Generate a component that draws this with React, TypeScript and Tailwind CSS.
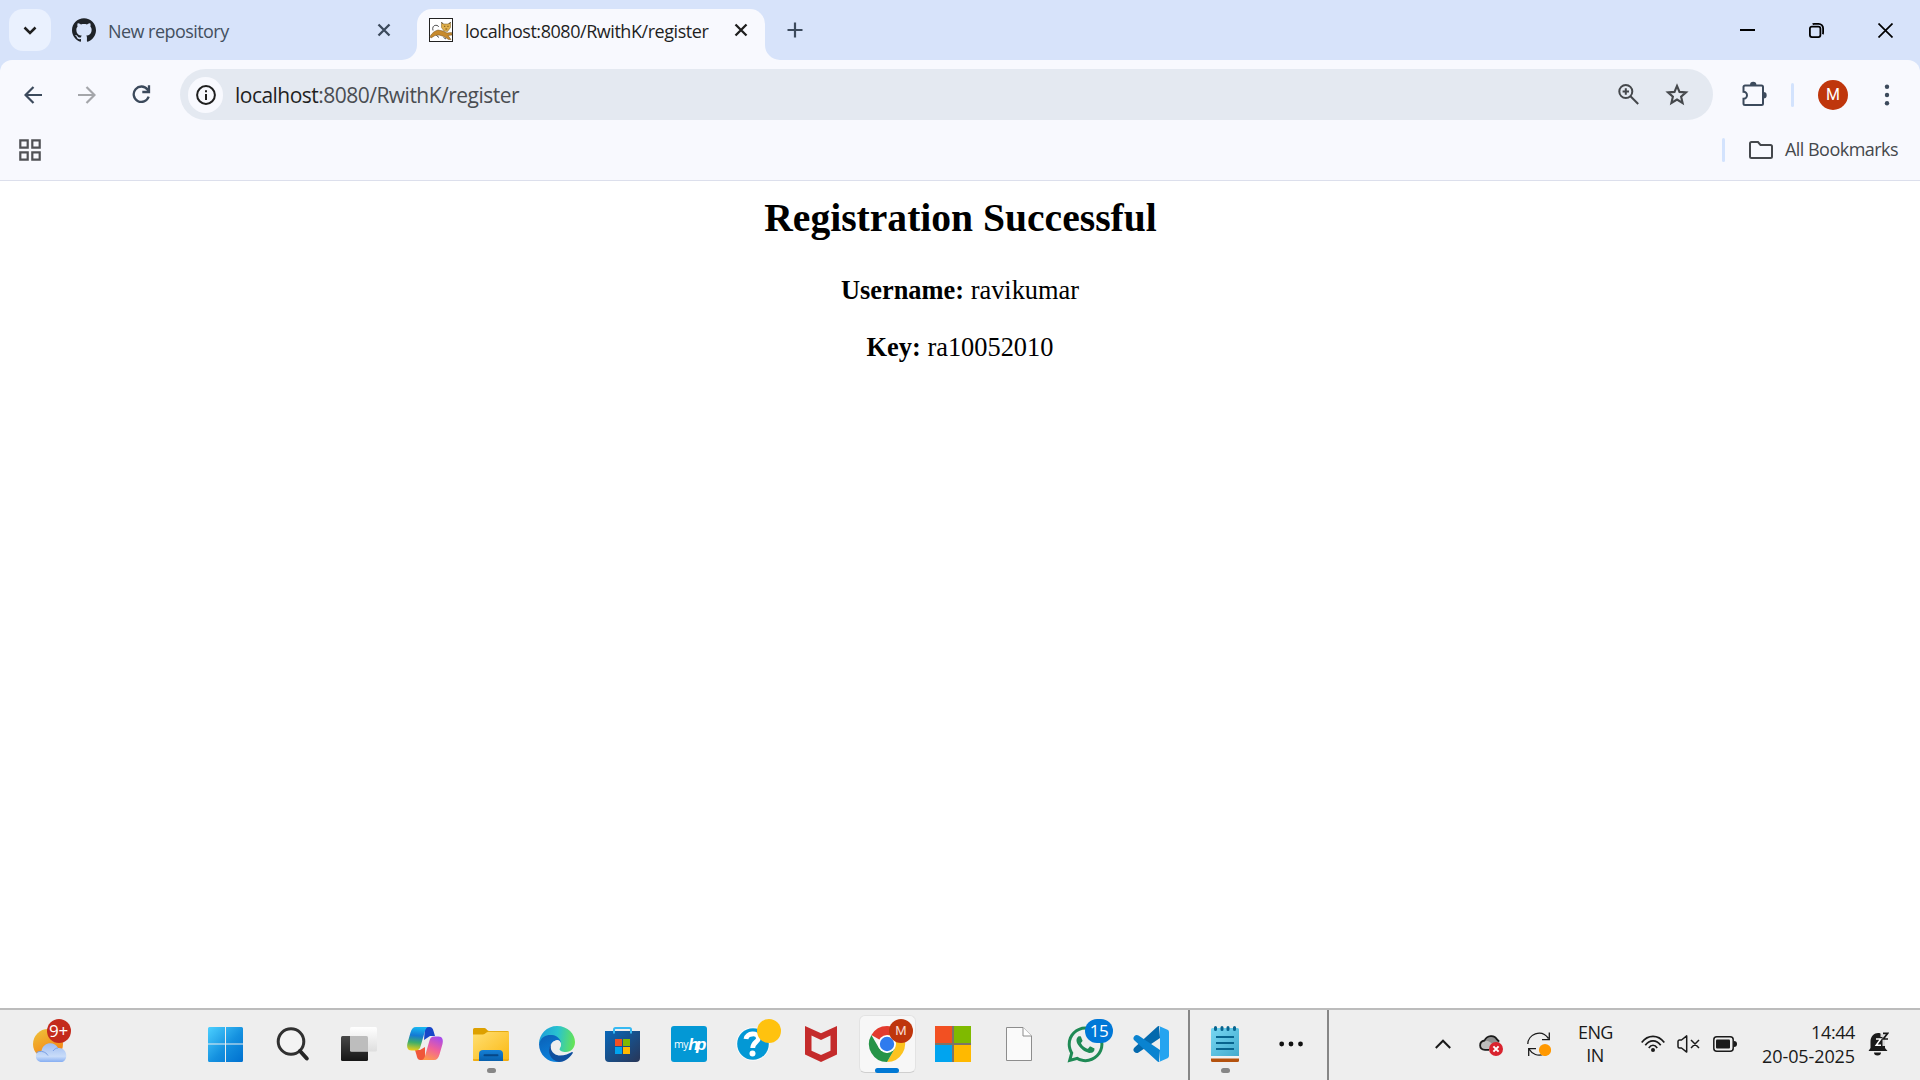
import type { ReactNode } from "react";
import { SiGithub } from "react-icons/si";
import { FaWhatsapp } from "react-icons/fa";

const sans = "font-['Open_Sans',sans-serif]";

function TomcatIcon() {
  return (
    <svg width="24" height="24" viewBox="0 0 24 24" className="shrink-0">
      <rect x=".5" y=".5" width="23" height="23" fill="#fff" stroke="#222" />
      <path d="M1 18.500C3 15 5.500 13 9 12L14 13L18 15L22.500 14.500L23 17L19 17.500L22 21.500L19.500 21.500L15 18.500L10 17L6 17.500L2 20Z" fill="#c78a2c" stroke="#6b4a1c" strokeWidth=".5" />
      <path d="M12.5 4.500L14.500 6H19L21.500 4.500V9.500L18.500 13.500L15 13L12.500 9.500Z" fill="#e0b04c" stroke="#7a5a22" strokeWidth=".5" />
      <path d="M15 8.300h1.300M18.300 8.300h1.300M16.400 11h1.800" stroke="#6e4a10" strokeWidth=".9" />
      <path d="M12.500 4.200l1.600 1.600M21.600 4.200l-1.600 1.600M4 12.500c-1-3 .5-5.300 2.800-5.200s2.500.7 2.700 1.700M7.500 17.500l2.500 2M14.500 19.500l2.500 1.500" stroke="#222" strokeWidth=".8" fill="none" />
    </svg>
  );
}

function Cross({ color }: { color: string }) {
  return (
    <svg width="14" height="14" viewBox="0 0 14 14" fill="none" stroke={color} strokeWidth="2.3">
      <path d="M1.5 1.5l11 11M12.500 1.500l-11 11" />
    </svg>
  );
}

function TabStrip() {
  return (
    <header className="flex h-[60px] items-center bg-[#d7e3fa]">
      <button className="ml-[9px] flex h-[42px] w-[42px] items-center justify-center rounded-[14px] bg-[#eaf1fe]">
        <svg width="14" height="9" viewBox="0 0 14 9" fill="none" stroke="#1f1f1f" strokeWidth="2.5"><path d="M1.500 1.500L7 7l5.500-5.500" /></svg>
      </button>
      <div className="ml-[21px] flex h-[42px] w-[345px] items-center text-[#44505f]">
        <SiGithub size={24} color="#1f2328" />
        <span className="ml-3 h-6 flex-1 pt-px text-[18px] leading-6 tracking-[-0.55px]">New repository</span>
        <span className="mr-[26px]"><Cross color="#3c4a5c" /></span>
      </div>
      <div className="relative h-[51px] w-[348px] self-end rounded-t-[15px] bg-[#f8f9fe] text-[#1f1f1f]">
        <svg className="absolute -left-[15px] bottom-0" width="15" height="15"><path d="M15 0A15 15 0 0 1 0 15H15Z" fill="#f8f9fe" /></svg>
        <svg className="absolute -right-[15px] bottom-0" width="15" height="15"><path d="M0 0A15 15 0 0 0 15 15H0Z" fill="#f8f9fe" /></svg>
        <div className="flex h-[42px] items-center pl-3">
          <TomcatIcon />
          <span className="ml-3 h-6 flex-1 whitespace-nowrap pt-px text-[18px] leading-6 tracking-[-0.45px]">localhost:8080/RwithK/register</span>
          <span className="mr-[17px]"><Cross color="#1f1f1f" /></span>
        </div>
      </div>
      <svg className="ml-[22px]" width="16" height="16" viewBox="0 0 16 16" stroke="#3c4a5c" strokeWidth="2.200"><path d="M8 .5v15M.5 8h15" /></svg>
      <div className="ml-auto mr-[27px] flex items-center gap-[54px]">
        <svg width="15" height="15" stroke="#000" strokeWidth="2"><path d="M0 7h15" /></svg>
        <svg width="15" height="15" viewBox="0 0 15 15" fill="none" stroke="#000" strokeWidth="1.800">
          <rect x=".9" y="3.600" width="10.500" height="10.500" rx="2" />
          <path d="M3.600 1.200C4.300.9 4.800.9 5.500.9h4.200a4.400 4.400 0 0 1 4.400 4.400v3.900c0 .9 0 1.400-.4 2" />
        </svg>
        <svg width="15" height="15" viewBox="0 0 15 15" fill="none" stroke="#000" strokeWidth="1.700"><path d="M.5.5l14 14M14.500.5l-14 14" /></svg>
      </div>
    </header>
  );
}

function Toolbar() {
  return (
    <div className="bg-[#d7e3fa]">
      <div className="flex h-[69px] items-center rounded-t-[12px] bg-[#f8f9fe]">
        <svg className="ml-6" width="18" height="18" viewBox="0 0 18 18" fill="none" stroke="#3c4a5c" strokeWidth="2.200"><path d="M18 9H1.700M9.500 1L1.500 9l8 8" /></svg>
        <svg className="ml-9" width="18" height="18" viewBox="0 0 18 18" fill="none" stroke="#a4a6aa" strokeWidth="2.200"><path d="M0 9h16.300M8.500 1l8 8-8 8" /></svg>
        <svg className="ml-9" width="19" height="19" viewBox="0 0 19 19" fill="none" stroke="#3c4a5c" strokeWidth="2.300">
          <path d="M16.700 11.700A7.700 7.700 0 1 1 15.500 4.500L17 6.500M17 .3v6.700h-6.700" />
        </svg>
        <div className="ml-[29px] flex h-[51px] w-[1533px] items-center rounded-full bg-[#e4e9f1] pl-2">
          <span className="flex h-[36px] w-[35px] items-center justify-center rounded-full bg-[#f8f9fe]">
            <svg width="20" height="20" viewBox="0 0 20 20" fill="none" stroke="#1f1f1f">
              <circle cx="10" cy="10" r="8.900" strokeWidth="2" /><path d="M10 9v6M10 5.300v2" strokeWidth="2" />
            </svg>
          </span>
          <span className="ml-3 h-7 flex-1 text-[21px] leading-7 tracking-[-0.52px] text-[#4a4d52]"><span className="text-[#1f1f1f]">localhost</span>:8080/RwithK/register</span>
          <svg className="mr-[26px]" width="21" height="21" viewBox="0 0 21 21" fill="none" stroke="#45484c" strokeWidth="2">
            <circle cx="7.800" cy="7.500" r="6.500" /><path d="M12.500 12.200l7.700 7.800M7.800 4.300v6.400M4.600 7.500H11" />
          </svg>
          <svg className="mr-[24px]" width="24" height="24" viewBox="0 0 24 24" fill="none" stroke="#45484c" strokeWidth="2.100">
            <path d="M12 2.900l2.500 6 6.500.5-4.900 4.200 1.500 6.400L12 16.600 6.400 20l1.500-6.400L3 9.400l6.500-.5z" />
          </svg>
        </div>
        <svg className="-mt-[2px] ml-[29px]" width="25" height="25" viewBox="0 0 25 25" fill="none" stroke="#3c4a5c" strokeWidth="2">
          <path d="M3 4.500H19.500a1.500 1.500 0 0 1 1.500 1.500V22.500a1.500 1.500 0 0 1-1.500 1.500H3a1.500 1.500 0 0 1-1.500-1.500V17.700a3.500 3.500 0 0 0 0-7V6A1.500 1.500 0 0 1 3 4.500Z" />
          <path d="M8 4a3.200 3.200 0 0 1 6.400 0zM21.500 11a3.200 3.200 0 0 1 0 6.400z" fill="#3c4a5c" stroke="none" />
        </svg>
        <span className="ml-[24px] h-6 w-[3px] rounded-full bg-[#d3e3fd]" />
        <span className="ml-6 flex h-[30px] w-[30px] items-center justify-center rounded-full bg-[#bf360c] text-[16px] text-white font-['Roboto',sans-serif]">M</span>
        <svg className="ml-9" width="6" height="22" viewBox="0 0 6 22" fill="#3c4a5c"><circle cx="3" cy="2.800" r="2.200" /><circle cx="3" cy="11" r="2.200" /><circle cx="3" cy="19.200" r="2.200" /></svg>
      </div>
    </div>
  );
}

function BookmarksBar() {
  return (
    <div className="flex h-[52px] items-center border-b border-[#dcdfec] bg-[#f8f9fe] pb-[9px]">
      <svg className="ml-[19px]" width="22" height="22" viewBox="0 0 22 22" fill="none" stroke="#505256" strokeWidth="2.200">
        <path d="M1.300 1.300H8.700V8.700H1.300ZM13.300 1.300H20.700V8.700H13.300ZM1.300 13.300H8.700V20.700H1.300ZM13.300 13.300H20.700V20.700H13.300Z" />
      </svg>
      <span className="ml-auto h-6 w-[3px] rounded-full bg-[#d3e3fd]" />
      <svg className="ml-6" width="24" height="18" viewBox="0 0 24 18" fill="none" stroke="#45484c" strokeWidth="2"><path d="M2.500 1H9l2.500 3H21.500A1.500 1.500 0 0 1 23 5.500V15.500A1.500 1.500 0 0 1 21.500 17H2.500A1.500 1.500 0 0 1 1 15.500V2.500A1.500 1.500 0 0 1 2.500 1Z" /></svg>
      <span className="mb-[2px] ml-3 mr-[21px] h-6 w-[114px] whitespace-nowrap text-[18px] leading-6 tracking-[-0.53px] text-[#45484c]">All Bookmarks</span>
    </div>
  );
}

function App36({ children }: { children: ReactNode }) {
  return <svg width="36" height="36" viewBox="0 0 36 36" className="overflow-visible">{children}</svg>;
}

function Slot({ children, running, active }: { children: ReactNode; running?: boolean; active?: boolean }) {
  return (
    <div className="relative flex h-[70px] w-[66px] shrink-0 items-center justify-center">
      {active && <span className="absolute left-[5px] top-[5px] h-[58px] w-[57px] rounded-[6px] border border-[#e3e3e3] border-b-[#cfcfcf] bg-[#f7f7f7]" />}
      <span className="relative -mt-[2px]">{children}</span>
      {running && <span className="absolute left-[29px] top-[58px] h-[5px] w-[9px] rounded-full bg-[#868686]" />}
      {active && <span className="absolute left-[21px] top-[58px] h-[5px] w-6 rounded-full bg-[#0078d4]" />}
    </div>
  );
}

function Pinned() {
  return (
    <>
      <Slot><App36>
        <defs><linearGradient id="win" x1="0" y1="0" x2="1" y2="1"><stop offset="0" stopColor="#4cd0ff" /><stop offset=".55" stopColor="#1490df" /><stop offset="1" stopColor="#0070cf" /></linearGradient></defs>
        <path d="M-1 2.500A1.500 1.500 0 0 1 .5 1H16V17.500H-1ZM17 1H32.500A1.500 1.500 0 0 1 34 2.500V17.500H17ZM-1 18.500H16V36H.5A1.500 1.500 0 0 1-1 34.500ZM17 18.500H34V34.500A1.500 1.500 0 0 1 32.500 36H17Z" fill="url(#win)" />
      </App36></Slot>
      <Slot><App36>
        <circle cx="16" cy="15.500" r="12.800" fill="#f3f3f3" stroke="#303030" strokeWidth="3" /><path d="M25 25l6.800 7.500" stroke="#252525" strokeWidth="4" strokeLinecap="round" />
      </App36></Slot>
      <Slot><App36>
        <defs>
          <linearGradient id="tv1" x1="0" y1="0" x2="0" y2="1"><stop stopColor="#484848" /><stop offset="1" stopColor="#161616" /></linearGradient>
          <linearGradient id="tv2" x1="0" y1="0" x2="0" y2="1"><stop stopColor="#fff" /><stop offset="1" stopColor="#dedede" /></linearGradient>
        </defs>
        <rect x="0" y="10" width="27" height="25" rx="1.500" fill="url(#tv1)" />
        <rect x="9" y="1" width="27" height="24.500" rx="1.500" fill="url(#tv2)" />
        <path d="M9 10H25.500A1.500 1.500 0 0 1 27 11.500V25.500H10.500A1.500 1.500 0 0 1 9 24Z" fill="#bdbdbd" />
      </App36></Slot>
      <Slot><App36>
        <defs>
          <linearGradient id="cp1" x1="0.300" y1="0" x2="0.200" y2="1"><stop stopColor="#18b5f0" /><stop offset=".35" stopColor="#1479d4" /><stop offset=".65" stopColor="#3fae6a" /><stop offset="1" stopColor="#f2cf15" /></linearGradient>
          <linearGradient id="cp2" x1=".7" y1="0" x2=".3" y2="1"><stop stopColor="#a94bea" /><stop offset=".5" stopColor="#f0609a" /><stop offset="1" stopColor="#ff9a4c" /></linearGradient>
        </defs>
        <path d="M18 1H22.500C25 1 26 3 26.500 5L28 10H23L17 14Z" fill="#1746c8" />
        <path d="M18 34H13.500C11 34 10 32 9.500 29L8 24H13L18 21Z" fill="#f0573a" />
        <path d="M9 1H22C19.500 1 18.700 3 18 5L13.500 20.500C12.700 23 11.500 24.500 8.500 24.500H4.500C.5 24.500-.5 21 .5 17L3.500 6.500C4.500 3 6 1 9 1Z" fill="url(#cp1)" />
        <path d="M27 34H14C16.500 34 17.300 32 18 30L22.500 14.500C23.300 12 24.500 10.500 27.500 10.500H31.500C35.500 10.500 36.500 14 35.500 18L32.500 28.500C31.500 32 30 34 27 34Z" fill="url(#cp2)" />
      </App36></Slot>
      <Slot running><App36>
        <defs>
          <linearGradient id="fe1" x1="0" y1="0" x2="1" y2="1"><stop stopColor="#ffdf72" /><stop offset="1" stopColor="#fbb812" /></linearGradient>
          <linearGradient id="fe2" x1="0" y1="0" x2="0" y2="1"><stop stopColor="#1580d6" /><stop offset="1" stopColor="#0860ad" /></linearGradient>
        </defs>
        <path d="M0 3.500A1.500 1.500 0 0 1 1.500 2H11.500C13.500 2 14 5 16 5H34.500A1.500 1.500 0 0 1 36 6.500V12H0Z" fill="#dda000" />
        <path d="M0 8.500H10C12.500 8.500 13 5.800 16 5.800H36V34H35L1 35A1 1 0 0 1 0 34Z" fill="url(#fe1)" />
        <path d="M0 33H36V33.500A1.500 1.500 0 0 1 34.500 35H1.500A1.500 1.500 0 0 1 0 33.500Z" fill="#f0ad15" />
        <path d="M6 35V28A4 4 0 0 1 10 24H26A4 4 0 0 1 30 28V35Z" fill="url(#fe2)" />
        <path d="M11.500 29.200H24.500" stroke="#064787" strokeWidth="2" strokeLinecap="round" />
      </App36></Slot>
      <Slot><App36>
        <defs>
          <linearGradient id="ed1" x1="0" y1=".4" x2="1" y2=".5"><stop stopColor="#1c9ed9" /><stop offset=".5" stopColor="#29c3cf" /><stop offset="1" stopColor="#66e454" /></linearGradient>
          <linearGradient id="ed2" x1="0" y1="0" x2=".4" y2="1"><stop stopColor="#0b5fb5" /><stop offset="1" stopColor="#0c82dc" /></linearGradient>
        </defs>
        <path d="M0 18C0 8 8 0 18 0C29 0 36 8 36 16C36 22 32 26 27 26C23 26 20 24.500 20.500 23C21.500 21 22.500 19.500 21.500 17C20 12 8 8 0 18Z" fill="url(#ed1)" />
        <path d="M0 18C2 10 8 8.500 13 9C18.500 9.500 22.500 14 22 18C21 13.500 15 13 12 18C8 26 15 36 24 35C14 39 0 32 0 18Z" fill="url(#ed2)" />
        <path d="M14 15C9 21 13 29.500 21 29.500C26 29.500 30 27.500 32.500 26.200C33.300 25.800 34.200 26.500 33.700 27.300C30 33 25 36 20 36C11 34.500 7.500 25 12 18Z" fill="#104f9f" />
        <path d="M14 17.500C15.500 13 21.500 12.500 22 18C22.200 20.500 19.500 21.500 20.500 23.500C18 24 13.500 22 14 17.500Z" fill="#eeeeee" />
      </App36></Slot>
      <Slot><App36>
        <defs><linearGradient id="st" x1="0" y1="0" x2="1" y2="1"><stop stopColor="#0867b9" /><stop offset="1" stopColor="#293657" /></linearGradient></defs>
        <path d="M0 5H35V32A4 4 0 0 1 31 36H4A4 4 0 0 1 0 32Z" fill="url(#st)" />
        <path d="M9 7.500V3.500A1.500 1.500 0 0 1 10.500 2H24.500A1.500 1.500 0 0 1 26 3.500V7.500" fill="none" stroke="#36b9f2" strokeWidth="2" />
        <path d="M10 13H17V20H10Z" fill="#f25022" /><path d="M18 13H25V20H18Z" fill="#7fba00" /><path d="M10 21H17V28H10Z" fill="#00a4ef" /><path d="M18 21H25V28H18Z" fill="#ffb900" />
      </App36></Slot>
      <Slot>
        <span className="flex h-9 w-9 items-center justify-center rounded-[3px] bg-[#0398d5] text-white">
          <span className="pt-px text-[10.500px] leading-none tracking-[-0.4px]">my</span><span className="text-[17px] font-bold italic leading-none tracking-[-2.500px] font-['Liberation_Sans',sans-serif]">hp</span>
        </span>
      </Slot>
      <Slot><App36>
        <circle cx="16" cy="18" r="16.800" fill="#fafafa" /><circle cx="16" cy="18" r="15.800" fill="#0398d5" />
        <path d="M9 13C9.500 7 21 6 21.500 12C21.500 16 16 16 15.700 22" fill="none" stroke="#fff" strokeWidth="4.800" /><circle cx="15.500" cy="27.500" r="3" fill="#fff" />
        <circle cx="32" cy="5" r="12" fill="#ffc20e" />
      </App36></Slot>
      <Slot><App36>
        <path d="M2 0L18 7.200L34 0V28.500L18 36L2 28.500ZM8.500 9.500V24.700L18 29L27.500 24.700V9.500L18 14Z" fill="#c42b2b" fillRule="evenodd" />
      </App36></Slot>
      <Slot active>
        <App36>
          <path d="M18 18L2.400 9A18 18 0 0 1 33.600 9H18Z" fill="#e33b2e" />
          <path d="M33.600 9A18 18 0 0 1 18 36L25.800 22.500L18 9Z" fill="#fcc31e" />
          <path d="M18 36A18 18 0 0 1 2.400 9L10.200 22.500L18 27L25.800 22.500Z" fill="#259447" />
          <circle cx="18" cy="18" r="9" fill="#fff" /><circle cx="18" cy="18" r="7.200" fill="#2f7bee" />
        </App36>
        <span className="absolute -top-[7px] left-5 flex h-6 w-6 items-center justify-center rounded-full bg-[#bf360c] text-[13px] text-[#f9d9cf] font-['Roboto',sans-serif]">M</span>
      </Slot>
      <Slot><App36>
        <path d="M0 0H36V36H0Z" fill="#7d7467" /><path d="M0 0H17V17H0Z" fill="#f25022" /><path d="M19 0H36V17H19Z" fill="#7fba00" /><path d="M0 19H17V36H0Z" fill="#00a4ef" /><path d="M19 19H36V36H19Z" fill="#ffb900" />
      </App36></Slot>
      <Slot><App36>
        <path d="M5.500 1.500H22L30.500 10V34.500H5.500Z" fill="#fafafa" stroke="#8d8d8d" strokeWidth="1" /><path d="M22 1.500V10H30.500" fill="#fff" stroke="#8d8d8d" />
      </App36></Slot>
      <Slot>
        <FaWhatsapp size={41} color="#1f8a55" className="-m-[2.500px]" />
        <span className="absolute -top-[7px] left-[18px] flex h-6 w-7 items-center justify-center rounded-full bg-[#0078d7] text-[17px] tracking-[-0.5px] text-white">15</span>
      </Slot>
      <Slot><App36>
        <path d="M26 0L27 12L5.500 26.500C4 27.500 2.500 27 1.500 26C0 24.500 0 23 1.500 21.500L24 1C24.500.4 25.200 0 26 0Z" fill="#0469ad" />
        <path d="M26 36L27 24L5.500 9.500C4 8.500 2.500 9 1.500 10C0 11.500 0 13 1.500 14.500L24 35C24.500 35.600 25.200 36 26 36Z" fill="#0a83d0" />
        <path d="M26 0L34.500 3.800A2.500 2.500 0 0 1 36 6V30A2.500 2.500 0 0 1 34.500 32.200L26 36C26.500 35.500 27 35 27 34V2C27 1 26.500.5 26 0Z" fill="#25a4f0" />
      </App36></Slot>
    </>
  );
}

function Taskbar() {
  return (
    <footer className="flex h-[72px] border-t-2 border-[#bcbcbc] bg-[#eeeeee]">
      <div className="w-[194px] pl-[33px] pt-[8px]">
        <div className="relative">
          <svg width="36" height="44" viewBox="0 0 36 44">
            <defs>
              <linearGradient id="sun" x1=".1" y1="0" x2=".6" y2="1"><stop stopColor="#eec23a" /><stop offset="1" stopColor="#f57f12" /></linearGradient>
              <linearGradient id="cloud" x1="0" y1="0" x2="0" y2="1"><stop stopColor="#9dbcf0" /><stop offset=".7" stopColor="#c9dcf9" /><stop offset="1" stopColor="#86aef2" /></linearGradient>
            </defs>
            <circle cx="15" cy="26" r="15" fill="url(#sun)" />
            <path d="M9 44C1 44 1 33 8.500 33C10 23.500 22 23 25 30C35 29 36 44 28 44Z" fill="url(#cloud)" />
            <path d="M3.500 34.500C8 32 13 34 15 37.500M20 33C21.500 31 23 30 25 30" fill="none" stroke="#7a9fe2" strokeWidth="1" />
          </svg>
          <span className="absolute left-[13.500px] top-[0.500px] flex h-6 w-6 items-center justify-center rounded-full bg-[#c42b1c] text-[17px] font-medium leading-none tracking-[-0.3px] text-white">9+</span>
        </div>
      </div>
      <Pinned />
      <div className="ml-[4px] flex w-[141px] border-x-2 border-[#868686]">
        <div className="ml-[2px] flex">
          <Slot running><App36>
            <defs><linearGradient id="np" x1="0" y1="0" x2="1" y2="1"><stop stopColor="#77d7f2" /><stop offset="1" stopColor="#43abce" /></linearGradient></defs>
            <path d="M4 30H32V34.500A1.500 1.500 0 0 1 30.500 36H5.500A1.500 1.500 0 0 1 4 34.500Z" fill="#b4520e" /><path d="M4 29H32V32.500H4Z" fill="#f2f2f2" />
            <path d="M4 3.500A1.500 1.500 0 0 1 5.500 2H30.500A1.500 1.500 0 0 1 32 3.500V30H4Z" fill="url(#np)" />
            <path d="M9 11H27M9 17H27M9 23H27" stroke="#08648e" strokeWidth="2" />
            <path d="M8.500 1.500V3.500M15 1.500V3.500M21 1.500V3.500M27.500 1.500V3.500" stroke="#08648e" strokeWidth="3" strokeLinecap="round" />
          </App36></Slot>
          <Slot><App36><circle cx="8.700" cy="18" r="2.400" fill="#111" /><circle cx="18" cy="18" r="2.400" fill="#111" /><circle cx="27.500" cy="18" r="2.400" fill="#111" /></App36></Slot>
        </div>
      </div>
      <div className="flex flex-1 items-center pb-[2px] text-[#1a1a1a]">
        <svg className="ml-[106px]" width="16" height="10" viewBox="0 0 16 10" fill="none" stroke="#1a1a1a" strokeWidth="2"><path d="M.8 9L8 1.700 15.200 9" /></svg>
        <svg className="ml-[28px]" width="24" height="24" viewBox="0 0 24 24">
          <path d="M5.500 9C7.500 3 15 2 18 7L21 10L14 14Z" fill="#8e8e8e" />
          <path d="M5 9C9 8 11 10 15 13L12 17.500H6C0 17.500 0 10 5 9Z" fill="#bdbdbd" />
          <path d="M10 17.800H6C-.5 17.500-.3 9.500 5.500 8.500C8 3 15.500 2.500 18 7.500L20 9.500" fill="none" stroke="#1a1a1a" strokeWidth="1.800" />
          <circle cx="17" cy="17" r="7" fill="#d9232e" /><path d="M14.400 14.400l5.200 5.200M19.600 14.400l-5.200 5.200" stroke="#fff" strokeWidth="2" />
        </svg>
        <svg className="ml-6" width="24" height="24" viewBox="0 0 24 24" fill="none" stroke="#1a1a1a" strokeWidth="1.300">
          <path d="M.8 12C.8 3 14-4 21.500 6.500M22.300.5V7.700H15M17 22C11 25 5 22 2 17M1.700 24V16.700H9" /><circle cx="18" cy="18" r="6.100" fill="#ff9800" stroke="none" />
        </svg>
        <div className="mr-px ml-[27px] w-[34px] text-center text-[18px] leading-[23px] tracking-[-0.6px]">ENG<br />IN</div>
        <svg className="ml-[28px]" width="24" height="20" viewBox="0 0 24 20" fill="none" stroke="#1a1a1a" strokeWidth="1.700">
          <path d="M.7 8.500C7 .3 17 .3 23.300 8.500M4.300 11.300C8.500 5.500 15.500 5.500 19.700 11.300M7.800 14C10.200 10.300 13.800 10.300 16.200 14" /><circle cx="12" cy="16" r="2" fill="#1a1a1a" stroke="none" />
        </svg>
        <svg className="ml-3" width="23" height="18" viewBox="0 0 23 18" fill="none" stroke="#1a1a1a" strokeWidth="1.500">
          <path d="M1 6.500A1.500 1.500 0 0 1 2.500 5H4.500L9.700.9V17.100L4.500 13H2.500A1.500 1.500 0 0 1 1 11.500ZM14 5l8 8M22 5l-8 8" strokeLinejoin="round" />
        </svg>
        <svg className="ml-[13px]" width="24" height="16" viewBox="0 0 24 16">
          <rect x=".8" y=".8" width="19.400" height="14.400" rx="3" fill="none" stroke="#1a1a1a" strokeWidth="1.500" /><rect x="3" y="3.500" width="14" height="9" rx="1" fill="#1a1a1a" /><path d="M21 5C23 5 24 6 24 8S23 11 21 11Z" fill="#1a1a1a" />
        </svg>
        <div className="mb-px ml-auto whitespace-nowrap text-right text-[18px] leading-6"><div className="tracking-[-0.4px]">14:44</div><div className="tracking-[-0.1px]">20-05-2025</div></div>
        <svg className="ml-[13px] mr-[31px]" width="21" height="24" viewBox="0 0 21 24">
          <path d="M2.500 10C2.500-1.500 16.500-1.500 17 8V16L19.500 19H.5L2.500 16ZM6 20.500H13A3.500 3 0 0 1 6 20.500Z" fill="#1a1a1a" />
          <path d="M12.500 0H21V9H17V14H7V5H12.500Z" fill="#eeeeee" opacity=".9" />
          <path d="M15 1.300H19.700L15.300 7H20" fill="none" stroke="#1a1a1a" strokeWidth="1.700" />
          <path d="M6 5H14.500V15H6Z" fill="#1a1a1a" /><path d="M8 7H12.700L8.200 13.200H13" fill="none" stroke="#fff" strokeWidth="1.500" />
        </svg>
      </div>
    </footer>
  );
}

export default function App() {
  return (
    <div className={`flex h-[1080px] w-[1920px] flex-col overflow-hidden bg-white ${sans}`}>
      <TabStrip />
      <Toolbar />
      <BookmarksBar />
      <main className="flex-1 pt-[15px] text-center text-[26.4px] leading-[30px] text-black font-['Liberation_Serif',serif]">
        <h2 className="pl-px text-[39.6px] font-bold leading-[44px]">Registration Successful</h2>
        <p className="mt-[35px]"><b>Username:</b> ravikumar</p>
        <p className="mt-[27px]"><b>Key:</b> ra10052010</p>
      </main>
      <Taskbar />
    </div>
  );
}
